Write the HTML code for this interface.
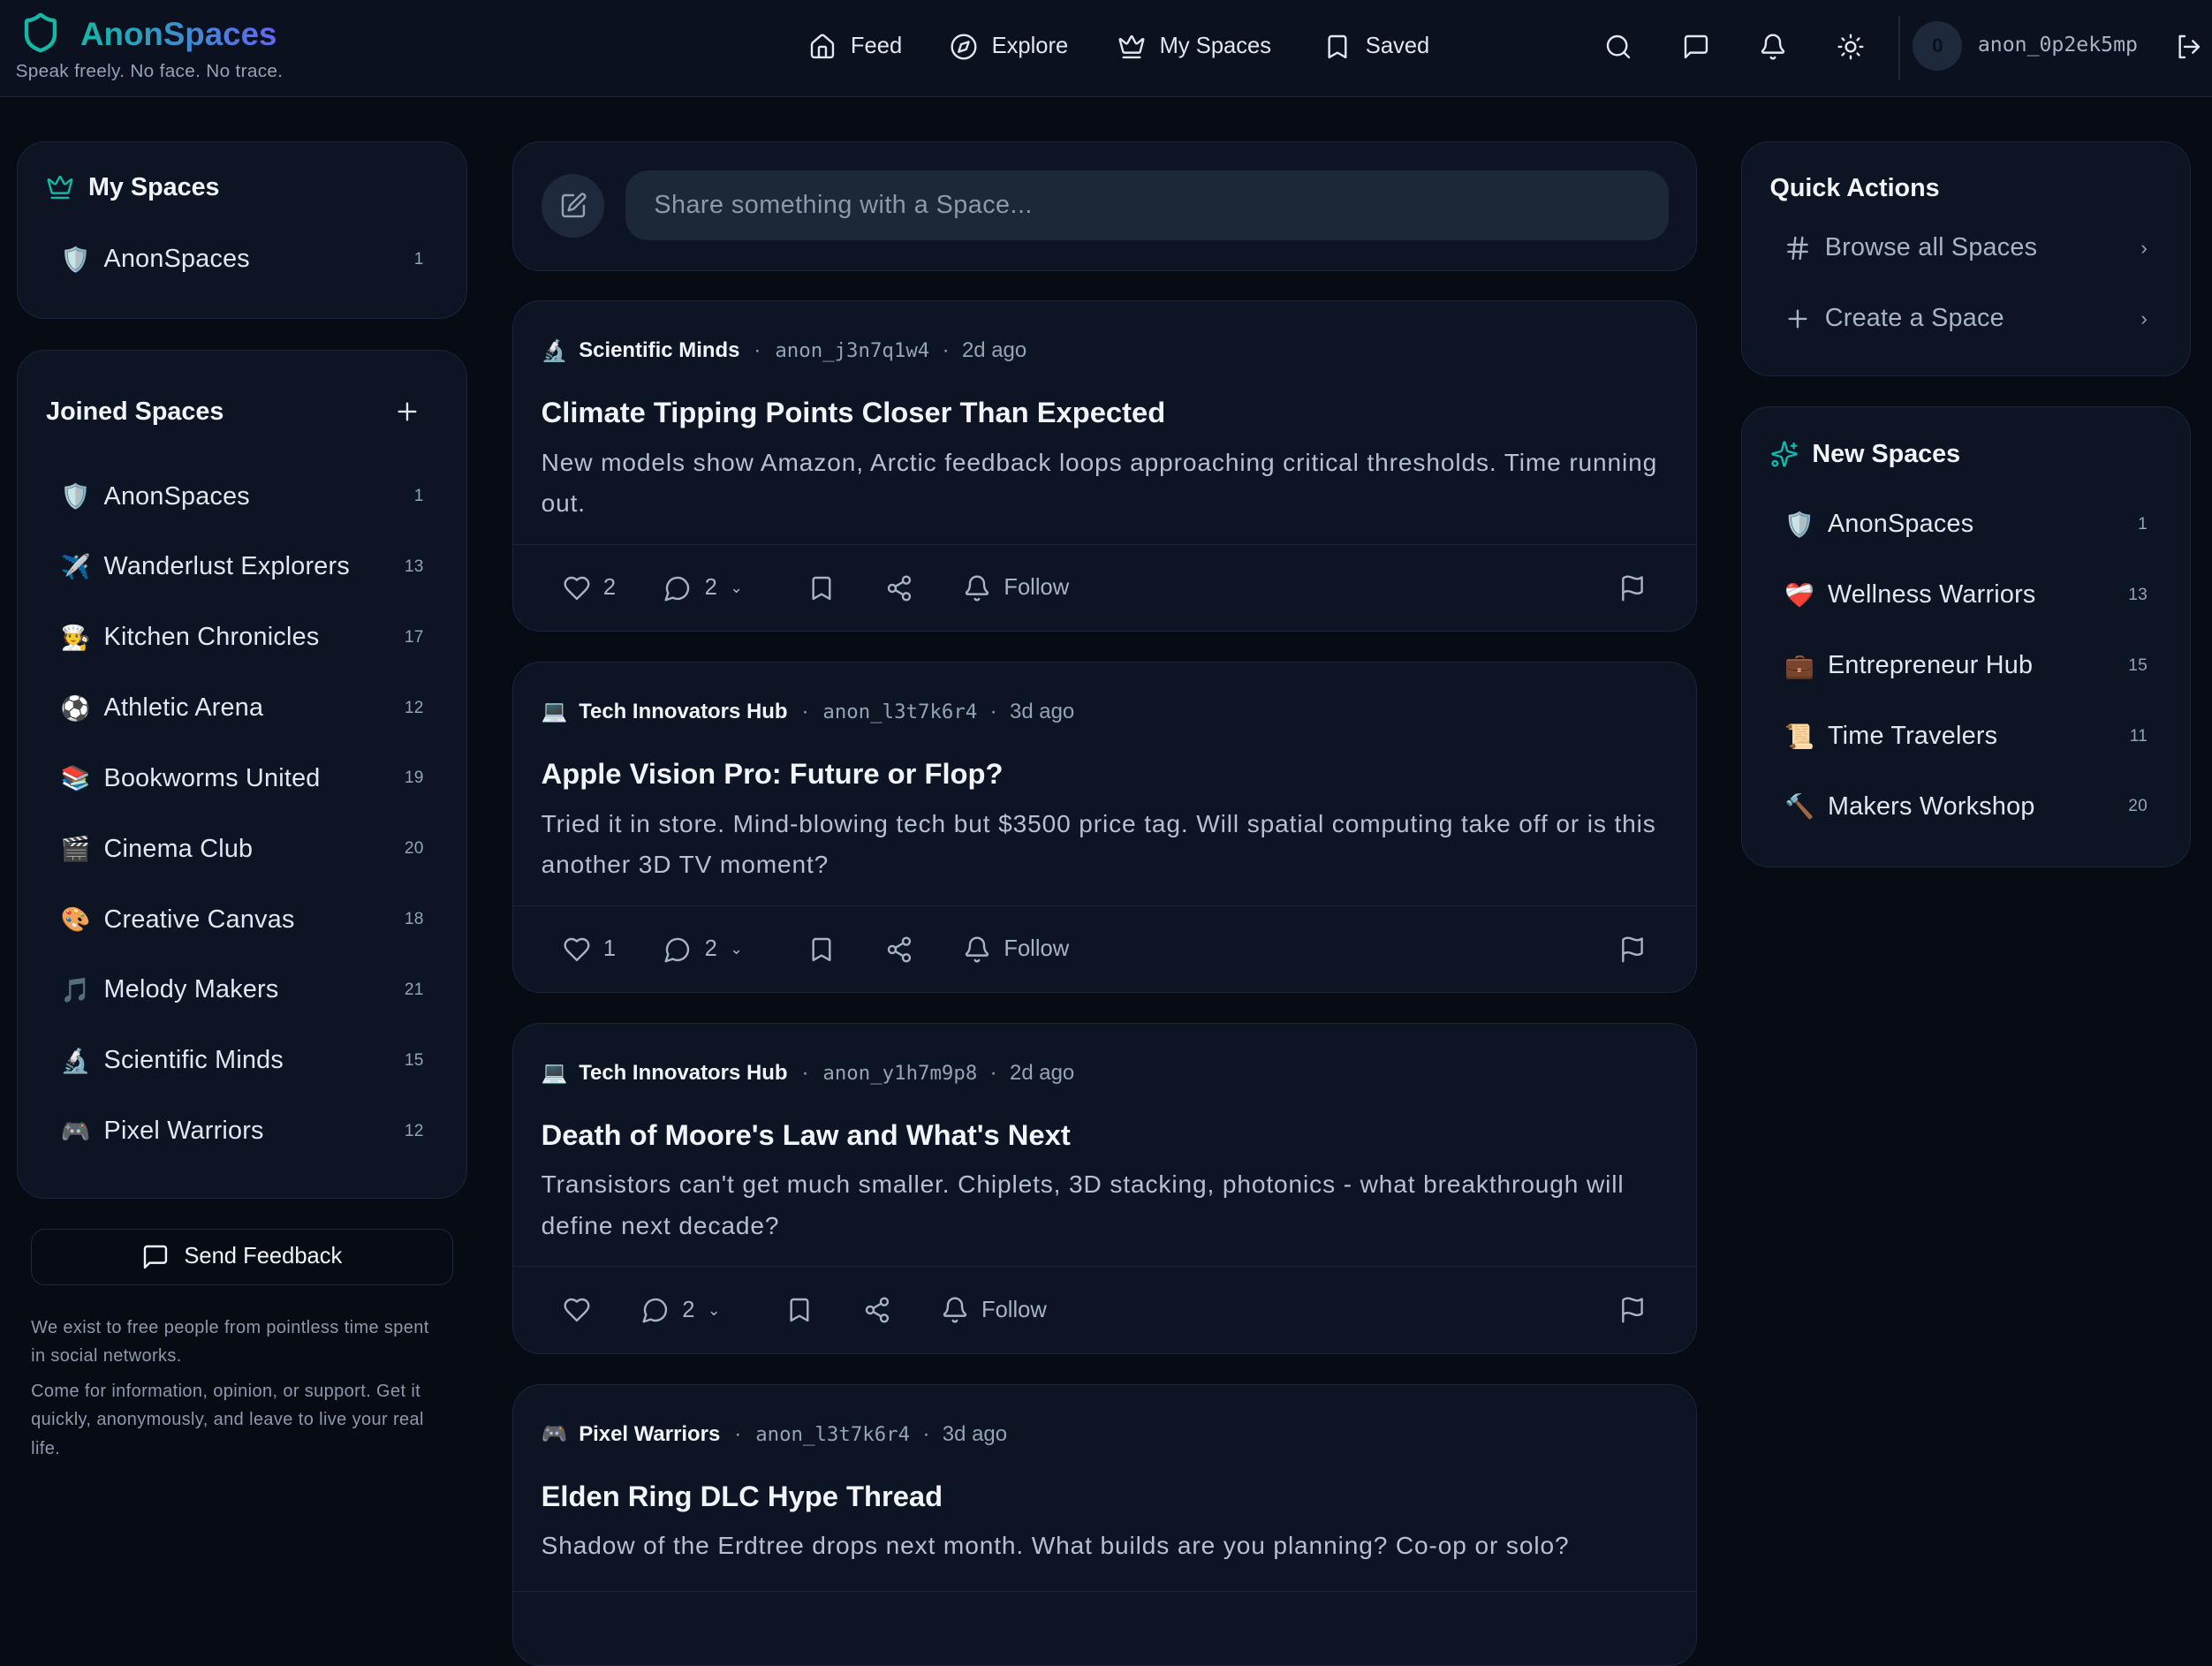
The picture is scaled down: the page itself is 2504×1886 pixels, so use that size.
<!DOCTYPE html>
<html><head><meta charset="utf-8">
<style>
html{zoom:1.5969}
*{box-sizing:border-box;margin:0;padding:0}
body{width:1568px;height:1130px;overflow:hidden;background:#070b14;font-family:"Liberation Sans","DejaVu Sans",sans-serif;color:#e2e8f0;position:relative}
svg.i{width:20px;height:20px;fill:none;stroke:currentColor;stroke-width:1.8;stroke-linecap:round;stroke-linejoin:round;flex:none}
.hdr{position:absolute;left:0;top:0;width:1568px;height:69px;background:#0b111e;border-bottom:1px solid #1c2536}
.logo{position:absolute;left:57px;top:11px;font-size:23px;font-weight:bold;background:linear-gradient(90deg,#14b8a6,#6366f1);-webkit-background-clip:text;background-clip:text;color:transparent}
.tag{position:absolute;left:11px;top:43px;font-size:13px;color:#94a3b8;letter-spacing:.2px}
.nav{position:absolute;top:23px;display:flex;align-items:center;gap:10px;font-size:16px;color:#e2e8f0}
.ic{position:absolute;top:23px;color:#e2e8f0}
.card{position:absolute;background:#0d1424;border:1px solid #1c2638;border-radius:20px}
.h{font-size:18px;font-weight:bold;color:#f1f5f9}
.row{position:absolute;left:30px;right:30px;display:flex;align-items:center;font-size:18px;color:#e2e8f0;letter-spacing:.15px}
.row .e{width:22px;font-size:17px;margin-right:9px;text-align:center}
.row .n{margin-left:auto;font-size:12px;color:#94a3b8}
.post{position:absolute;left:363px;width:840px;background:#0d1424;border:1px solid #1c2638;border-radius:20px;overflow:hidden}
.meta{position:absolute;left:20px;top:26px;display:flex;align-items:center;font-size:15px;color:#94a3b8}
.meta b{color:#f1f5f9;font-size:15px;margin:0 10px 0 8px}
.meta .m{font-family:"DejaVu Sans Mono","Liberation Mono",monospace;font-size:14px}
.meta .d{margin:0 9px}
.title{position:absolute;left:20px;top:67px;font-size:20.5px;font-weight:bold;color:#f1f5f9}
.body{position:absolute;left:20px;right:20px;top:100px;font-size:17.6px;line-height:29px;color:#b6c0ce;letter-spacing:.55px}
.acts{position:absolute;left:0;right:0;top:172px;height:62px;border-top:1px solid #1c2638;display:flex;align-items:center;padding-left:35px;font-size:16px;color:#a8b3c3}
.acts span{display:flex;align-items:center;gap:9px}
</style></head><body>
<div class="hdr">
<svg class="i" style="position:absolute;left:14px;top:8px;width:30px;height:30px;color:#14b8a6;stroke-width:2.2" viewBox="0 0 24 24"><path d="M20 13c0 5-3.5 7.5-7.7 9a1 1 0 0 1-.7 0C7.5 20.5 4 18 4 13V6a1 1 0 0 1 1-1c2 0 4.5-1.2 6.2-2.7a1.2 1.2 0 0 1 1.6 0C14.5 3.8 17 5 19 5a1 1 0 0 1 1 1z"/></svg>
<div class="logo">AnonSpaces</div>
<div class="tag">Speak freely. No face. No trace.</div>
<div class="nav" style="left:573px"><svg class="i" viewBox="0 0 24 24"><path d="M15 21v-8a1 1 0 0 0-1-1h-4a1 1 0 0 0-1 1v8"/><path d="M3 10a2 2 0 0 1 .7-1.5l7-6a2 2 0 0 1 2.6 0l7 6A2 2 0 0 1 21 10v9a2 2 0 0 1-2 2H5a2 2 0 0 1-2-2z"/></svg>Feed</div>
<div class="nav" style="left:673px"><svg class="i" viewBox="0 0 24 24"><circle cx="12" cy="12" r="10"/><path d="m16.2 7.8-2.1 6.4-6.4 2.1 2.1-6.4z"/></svg>Explore</div>
<div class="nav" style="left:792px"><svg class="i" viewBox="0 0 24 24"><path d="M11.6 3.3a.5.5 0 0 1 .9 0l2.9 5.5a1 1 0 0 0 1.5.3l4.3-3.6a.5.5 0 0 1 .8.5l-2.8 10.3a1 1 0 0 1-1 .7H5.8a1 1 0 0 1-1-.7L2 6a.5.5 0 0 1 .8-.5l4.3 3.6a1 1 0 0 0 1.5-.3z"/><path d="M5 21h14"/></svg>My Spaces</div>
<div class="nav" style="left:938px"><svg class="i" viewBox="0 0 24 24"><path d="m19 21-7-4-7 4V5a2 2 0 0 1 2-2h10a2 2 0 0 1 2 2z"/></svg>Saved</div>
<svg class="i ic" style="left:1137px" viewBox="0 0 24 24"><circle cx="11" cy="11" r="8"/><path d="m21 21-4.3-4.3"/></svg>
<svg class="i ic" style="left:1192px" viewBox="0 0 24 24"><path d="M21 15a2 2 0 0 1-2 2H7l-4 4V5a2 2 0 0 1 2-2h14a2 2 0 0 1 2 2z"/></svg>
<svg class="i ic" style="left:1247px" viewBox="0 0 24 24"><path d="M10.3 21a1.9 1.9 0 0 0 3.4 0"/><path d="M3.3 15.3A1 1 0 0 0 4 17h16a1 1 0 0 0 .7-1.7C19.4 14 18 12.5 18 8A6 6 0 0 0 6 8c0 4.5-1.4 6-2.7 7.3"/></svg>
<svg class="i ic" style="left:1302px" viewBox="0 0 24 24"><circle cx="12" cy="12" r="4"/><path d="M12 2v2M12 20v2M4.9 4.9l1.4 1.4M17.7 17.7l1.4 1.4M2 12h2M20 12h2M6.3 17.7l-1.4 1.4M19.1 4.9l-1.4 1.4"/></svg>
<div style="position:absolute;left:1346px;top:11px;width:1px;height:46px;background:#1e293b"></div>
<div style="position:absolute;left:1356px;top:15px;width:35px;height:35px;border-radius:50%;background:#1e293b;color:#0b111e;font-weight:bold;font-size:14px;text-align:center;line-height:35px">0</div>
<div style="position:absolute;left:1402px;top:24px;font-family:'DejaVu Sans Mono','Liberation Mono',monospace;font-size:14.5px;color:#a8b3c3">anon_0p2ek5mp</div>
<svg class="i ic" style="left:1541px" viewBox="0 0 24 24"><path d="M9 3H5v18h4"/><path d="m16 17 5-5-5-5M21 12H9"/></svg>
</div>

<!-- left -->
<div class="card" style="left:12px;top:100px;width:319px;height:126px">
<div style="position:absolute;left:20px;top:22px;display:flex;align-items:center;gap:10px" class="h"><svg class="i" style="color:#14b8a6" viewBox="0 0 24 24"><path d="M11.6 3.3a.5.5 0 0 1 .9 0l2.9 5.5a1 1 0 0 0 1.5.3l4.3-3.6a.5.5 0 0 1 .8.5l-2.8 10.3a1 1 0 0 1-1 .7H5.8a1 1 0 0 1-1-.7L2 6a.5.5 0 0 1 .8-.5l4.3 3.6a1 1 0 0 0 1.5-.3z"/><path d="M5 21h14"/></svg>My Spaces</div>
<div class="row" style="top:73px"><span class="e">🛡️</span>AnonSpaces<span class="n">1</span></div>
</div>
<div class="card" style="left:12px;top:248px;width:319px;height:602px">
<div class="h" style="position:absolute;left:20px;top:33px">Joined Spaces</div>
<svg class="i" style="position:absolute;left:266px;top:33px" viewBox="0 0 24 24"><path d="M5 12h14M12 5v14"/></svg>
<div class="row" style="top:93px"><span class="e">🛡️</span>AnonSpaces<span class="n">1</span></div>
<div class="row" style="top:143px"><span class="e">✈️</span>Wanderlust Explorers<span class="n">13</span></div>
<div class="row" style="top:193px"><span class="e">🧑‍🍳</span>Kitchen Chronicles<span class="n">17</span></div>
<div class="row" style="top:243px"><span class="e">⚽</span>Athletic Arena<span class="n">12</span></div>
<div class="row" style="top:293px"><span class="e">📚</span>Bookworms United<span class="n">19</span></div>
<div class="row" style="top:343px"><span class="e">🎬</span>Cinema Club<span class="n">20</span></div>
<div class="row" style="top:393px"><span class="e">🎨</span>Creative Canvas<span class="n">18</span></div>
<div class="row" style="top:443px"><span class="e">🎵</span>Melody Makers<span class="n">21</span></div>
<div class="row" style="top:493px"><span class="e">🔬</span>Scientific Minds<span class="n">15</span></div>
<div class="row" style="top:543px"><span class="e">🎮</span>Pixel Warriors<span class="n">12</span></div>
</div>
<div style="position:absolute;left:22px;top:871px;width:299px;height:40px;border:1px solid #1e293b;border-radius:10px;display:flex;align-items:center;justify-content:center;gap:10px;font-size:16px;color:#f1f5f9"><svg class="i" viewBox="0 0 24 24"><path d="M21 15a2 2 0 0 1-2 2H7l-4 4V5a2 2 0 0 1 2-2h14a2 2 0 0 1 2 2z"/></svg>Send Feedback</div>
<div style="position:absolute;left:22px;top:931px;width:295px;font-size:12.5px;line-height:20.5px;color:#8d99ab;letter-spacing:.25px">We exist to free people from pointless time spent in social networks.<div style="margin-top:4px">Come for information, opinion, or support. Get it quickly, anonymously, and leave to live your real life.</div></div>

<!-- center -->
<div class="card" style="left:363px;top:100px;width:840px;height:92px">
<div style="position:absolute;left:20px;top:23px;width:45px;height:45px;border-radius:50%;background:#1e293b;display:flex;align-items:center;justify-content:center;color:#94a3b8"><svg class="i" viewBox="0 0 24 24"><path d="M12 3H5a2 2 0 0 0-2 2v14a2 2 0 0 0 2 2h14a2 2 0 0 0 2-2v-7"/><path d="M18.4 2.6a2.1 2.1 0 1 1 3 3L12.4 14.6 8 16l1.4-4.4z"/></svg></div>
<div style="position:absolute;left:80px;top:20px;width:739px;height:50px;border-radius:16px;background:#1c2738;font-size:18px;color:#8d99ab;padding-left:20px;line-height:50px;letter-spacing:.3px">Share something with a Space...</div>
</div>

<div class="post" style="top:213px;height:235px">
<div class="meta"><span>🔬</span><b>Scientific Minds</b>·<span class="m" style="margin-left:10px">anon_j3n7q1w4</span><span class="d">·</span>2d ago</div>
<div class="title">Climate Tipping Points Closer Than Expected</div>
<div class="body">New models show Amazon, Arctic feedback loops approaching critical thresholds. Time running out.</div>
<div class="acts"><span style="margin-right:34px"><svg class="i" viewBox="0 0 24 24"><path d="M19 14c1.5-1.5 3-3.2 3-5.5A5.5 5.5 0 0 0 16.5 3c-1.8 0-3 .5-4.5 2-1.5-1.5-2.7-2-4.5-2A5.5 5.5 0 0 0 2 8.5c0 2.3 1.5 4 3 5.5l7 7z"/></svg>2</span><span style="margin-right:46px"><svg class="i" viewBox="0 0 24 24"><path d="M7.9 20A9 9 0 1 0 4 16.1L2 22z"/></svg>2 <small style="font-size:11px">⌄</small></span><svg class="i" style="margin-right:35px" viewBox="0 0 24 24"><path d="m19 21-7-4-7 4V5a2 2 0 0 1 2-2h10a2 2 0 0 1 2 2z"/></svg><svg class="i" style="margin-right:35px" viewBox="0 0 24 24"><circle cx="18" cy="5" r="3"/><circle cx="6" cy="12" r="3"/><circle cx="18" cy="19" r="3"/><path d="m8.6 13.5 6.8 4M15.4 6.5l-6.8 4"/></svg><span><svg class="i" viewBox="0 0 24 24"><path d="M10.3 21a1.9 1.9 0 0 0 3.4 0"/><path d="M3.3 15.3A1 1 0 0 0 4 17h16a1 1 0 0 0 .7-1.7C19.4 14 18 12.5 18 8A6 6 0 0 0 6 8c0 4.5-1.4 6-2.7 7.3"/></svg>Follow</span><svg class="i" style="margin-left:auto;margin-right:35px" viewBox="0 0 24 24"><path d="M4 22V4a1 1 0 0 1 .4-.8A6 6 0 0 1 8 2c3 0 5 2 8 2a6 6 0 0 0 4-1.4V15a6 6 0 0 1-4 1.4c-3 0-5-2-8-2a6 6 0 0 0-4 1.4"/></svg></div>
</div>

<div class="post" style="top:469px;height:235px">
<div class="meta"><span>💻</span><b>Tech Innovators Hub</b>·<span class="m" style="margin-left:10px">anon_l3t7k6r4</span><span class="d">·</span>3d ago</div>
<div class="title">Apple Vision Pro: Future or Flop?</div>
<div class="body">Tried it in store. Mind-blowing tech but $3500 price tag. Will spatial computing take off or is this another 3D TV moment?</div>
<div class="acts"><span style="margin-right:34px"><svg class="i" viewBox="0 0 24 24"><path d="M19 14c1.5-1.5 3-3.2 3-5.5A5.5 5.5 0 0 0 16.5 3c-1.8 0-3 .5-4.5 2-1.5-1.5-2.7-2-4.5-2A5.5 5.5 0 0 0 2 8.5c0 2.3 1.5 4 3 5.5l7 7z"/></svg>1</span><span style="margin-right:46px"><svg class="i" viewBox="0 0 24 24"><path d="M7.9 20A9 9 0 1 0 4 16.1L2 22z"/></svg>2 <small style="font-size:11px">⌄</small></span><svg class="i" style="margin-right:35px" viewBox="0 0 24 24"><path d="m19 21-7-4-7 4V5a2 2 0 0 1 2-2h10a2 2 0 0 1 2 2z"/></svg><svg class="i" style="margin-right:35px" viewBox="0 0 24 24"><circle cx="18" cy="5" r="3"/><circle cx="6" cy="12" r="3"/><circle cx="18" cy="19" r="3"/><path d="m8.6 13.5 6.8 4M15.4 6.5l-6.8 4"/></svg><span><svg class="i" viewBox="0 0 24 24"><path d="M10.3 21a1.9 1.9 0 0 0 3.4 0"/><path d="M3.3 15.3A1 1 0 0 0 4 17h16a1 1 0 0 0 .7-1.7C19.4 14 18 12.5 18 8A6 6 0 0 0 6 8c0 4.5-1.4 6-2.7 7.3"/></svg>Follow</span><svg class="i" style="margin-left:auto;margin-right:35px" viewBox="0 0 24 24"><path d="M4 22V4a1 1 0 0 1 .4-.8A6 6 0 0 1 8 2c3 0 5 2 8 2a6 6 0 0 0 4-1.4V15a6 6 0 0 1-4 1.4c-3 0-5-2-8-2a6 6 0 0 0-4 1.4"/></svg></div>
</div>

<div class="post" style="top:725px;height:235px">
<div class="meta"><span>💻</span><b>Tech Innovators Hub</b>·<span class="m" style="margin-left:10px">anon_y1h7m9p8</span><span class="d">·</span>2d ago</div>
<div class="title">Death of Moore's Law and What's Next</div>
<div class="body">Transistors can't get much smaller. Chiplets, 3D stacking, photonics - what breakthrough will define next decade?</div>
<div class="acts"><span style="margin-right:36px"><svg class="i" viewBox="0 0 24 24"><path d="M19 14c1.5-1.5 3-3.2 3-5.5A5.5 5.5 0 0 0 16.5 3c-1.8 0-3 .5-4.5 2-1.5-1.5-2.7-2-4.5-2A5.5 5.5 0 0 0 2 8.5c0 2.3 1.5 4 3 5.5l7 7z"/></svg></span><span style="margin-right:46px"><svg class="i" viewBox="0 0 24 24"><path d="M7.9 20A9 9 0 1 0 4 16.1L2 22z"/></svg>2 <small style="font-size:11px">⌄</small></span><svg class="i" style="margin-right:35px" viewBox="0 0 24 24"><path d="m19 21-7-4-7 4V5a2 2 0 0 1 2-2h10a2 2 0 0 1 2 2z"/></svg><svg class="i" style="margin-right:35px" viewBox="0 0 24 24"><circle cx="18" cy="5" r="3"/><circle cx="6" cy="12" r="3"/><circle cx="18" cy="19" r="3"/><path d="m8.6 13.5 6.8 4M15.4 6.5l-6.8 4"/></svg><span><svg class="i" viewBox="0 0 24 24"><path d="M10.3 21a1.9 1.9 0 0 0 3.4 0"/><path d="M3.3 15.3A1 1 0 0 0 4 17h16a1 1 0 0 0 .7-1.7C19.4 14 18 12.5 18 8A6 6 0 0 0 6 8c0 4.5-1.4 6-2.7 7.3"/></svg>Follow</span><svg class="i" style="margin-left:auto;margin-right:35px" viewBox="0 0 24 24"><path d="M4 22V4a1 1 0 0 1 .4-.8A6 6 0 0 1 8 2c3 0 5 2 8 2a6 6 0 0 0 4-1.4V15a6 6 0 0 1-4 1.4c-3 0-5-2-8-2a6 6 0 0 0-4 1.4"/></svg></div>
</div>

<div class="post" style="top:981px;height:200px">
<div class="meta"><span>🎮</span><b>Pixel Warriors</b>·<span class="m" style="margin-left:10px">anon_l3t7k6r4</span><span class="d">·</span>3d ago</div>
<div class="title">Elden Ring DLC Hype Thread</div>
<div class="body">Shadow of the Erdtree drops next month. What builds are you planning? Co-op or solo?</div>
<div style="position:absolute;left:0;right:0;top:146px;border-top:1px solid #1c2638"></div>
</div>

<!-- right -->
<div class="card" style="left:1234px;top:100px;width:319px;height:167px">
<div class="h" style="position:absolute;left:20px;top:23px">Quick Actions</div>
<div class="row" style="top:65px;color:#a8b3c3"><svg class="i" style="margin-right:9px" viewBox="0 0 24 24"><path d="M4 9h16M4 15h16M10 3 8 21M16 3l-2 18"/></svg>Browse all Spaces<span class="n" style="font-size:14px">›</span></div>
<div class="row" style="top:115px;color:#a8b3c3"><svg class="i" style="margin-right:9px" viewBox="0 0 24 24"><path d="M5 12h14M12 5v14"/></svg>Create a Space<span class="n" style="font-size:14px">›</span></div>
</div>
<div class="card" style="left:1234px;top:288px;width:319px;height:327px">
<div style="position:absolute;left:20px;top:23px;display:flex;align-items:center;gap:10px" class="h"><svg class="i" style="color:#14b8a6" viewBox="0 0 24 24"><path d="M9.9 15.5A2 2 0 0 0 8.5 14.1L2.4 12.5a.5.5 0 0 1 0-1l6.1-1.6A2 2 0 0 0 9.9 8.5l1.6-6.1a.5.5 0 0 1 1 0l1.6 6.1a2 2 0 0 0 1.4 1.4l6.1 1.6a.5.5 0 0 1 0 1l-6.1 1.6a2 2 0 0 0-1.4 1.4l-1.6 6.1a.5.5 0 0 1-1 0z"/><path d="M20 3v4M22 5h-4"/><circle cx="4" cy="20" r="2"/></svg>New Spaces</div>
<div class="row" style="top:73px"><span class="e">🛡️</span>AnonSpaces<span class="n">1</span></div>
<div class="row" style="top:123px"><span class="e">❤️‍🩹</span>Wellness Warriors<span class="n">13</span></div>
<div class="row" style="top:173px"><span class="e">💼</span>Entrepreneur Hub<span class="n">15</span></div>
<div class="row" style="top:223px"><span class="e">📜</span>Time Travelers<span class="n">11</span></div>
<div class="row" style="top:273px"><span class="e">🔨</span>Makers Workshop<span class="n">20</span></div>
</div>
</body></html>
